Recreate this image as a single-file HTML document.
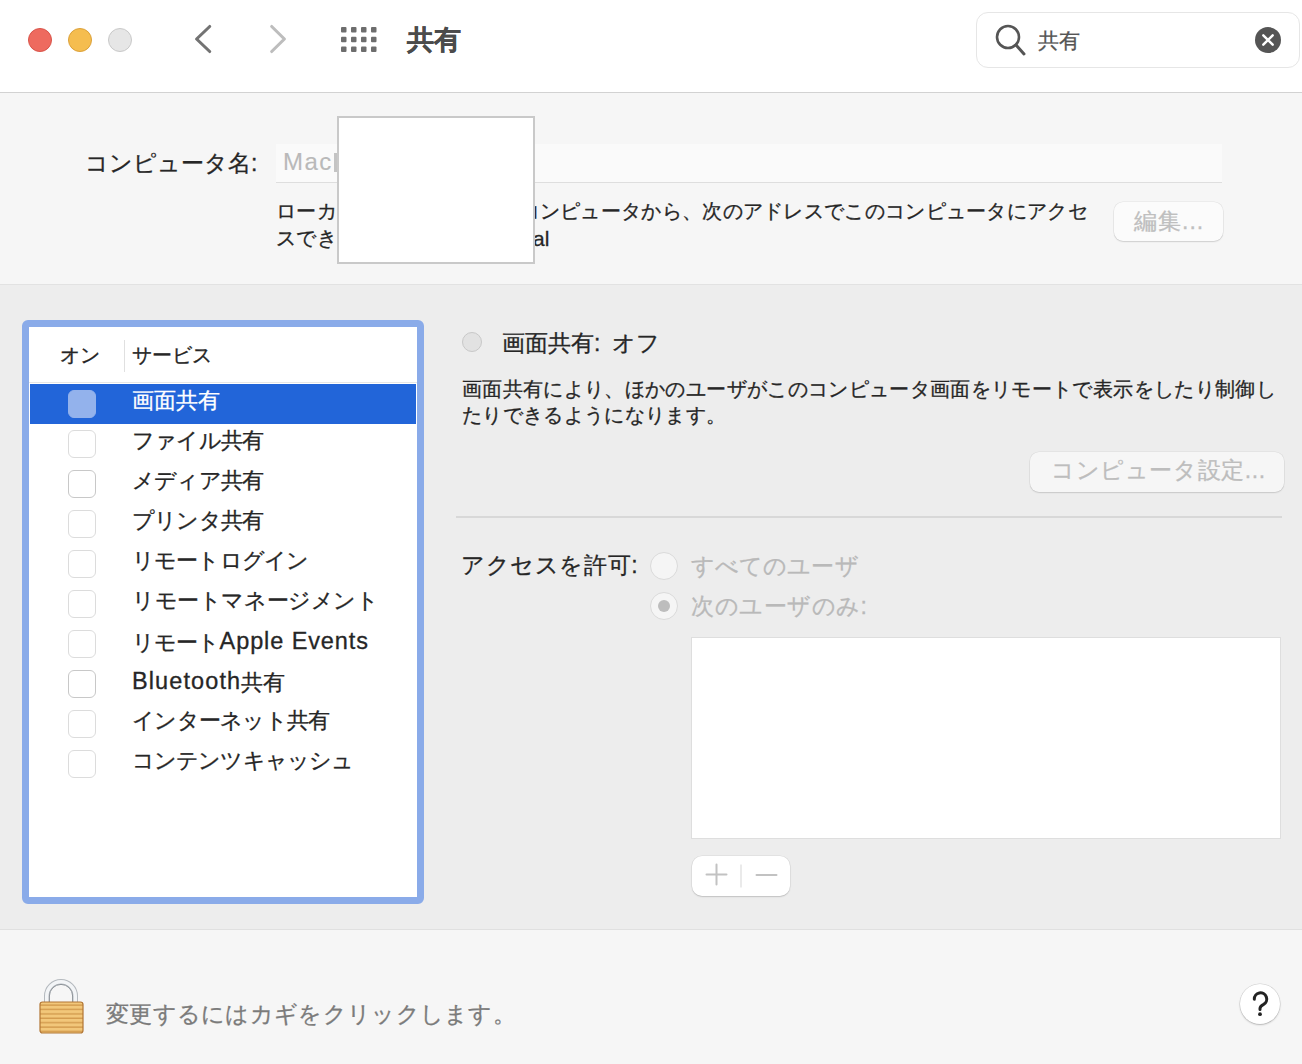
<!DOCTYPE html>
<html lang="ja">
<head>
<meta charset="utf-8">
<style>
html,body{margin:0;padding:0;}
body{width:1302px;height:1064px;position:relative;overflow:hidden;background:#ececec;font-family:"Liberation Sans",sans-serif;color:#262626;}
.a{position:absolute;}
.t{position:absolute;white-space:nowrap;line-height:1;-webkit-text-stroke:0.3px currentColor;}
#toolbar{left:0;top:0;width:1302px;height:92px;background:#fff;}
#tbline{left:0;top:92px;width:1302px;height:1px;background:#d2d2d2;}
#top{left:0;top:93px;width:1302px;height:191px;background:#f6f6f6;}
#topline{left:0;top:284px;width:1302px;height:1px;background:#e2e2e2;}
#mid{left:0;top:285px;width:1302px;height:644px;background:#ededed;}
#botline{left:0;top:929px;width:1302px;height:1px;background:#e0e0e0;}
#bot{left:0;top:930px;width:1302px;height:134px;background:#f6f6f6;}
.light{border-radius:50%;width:22px;height:22px;}
.cb{position:absolute;left:68px;width:26px;height:26px;border:1px solid #dcdcdc;border-radius:6px;background:#fff;box-sizing:content-box;}
.row{position:absolute;left:132px;font-size:21.5px;line-height:1;white-space:nowrap;color:#262626;-webkit-text-stroke:0.3px currentColor;}
</style>
</head>
<body>
<div id="toolbar" class="a"></div>
<div id="tbline" class="a"></div>
<div id="top" class="a"></div>
<div id="topline" class="a"></div>
<div id="mid" class="a"></div>
<div id="botline" class="a"></div>
<div id="bot" class="a"></div>

<!-- traffic lights -->
<div class="a light" style="left:28px;top:28px;background:#ee6a5f;border:1px solid #d9544a;"></div>
<div class="a light" style="left:68px;top:28px;background:#f5bd4f;border:1px solid #dca13a;"></div>
<div class="a light" style="left:108px;top:28px;background:#e6e6e6;border:1px solid #c9c9c9;"></div>

<!-- nav arrows -->
<svg class="a" style="left:180px;top:15px" width="120" height="50">
  <polyline points="29.7,11.5 16.6,24 29.7,36.5" fill="none" stroke="#737373" stroke-width="3.1" stroke-linecap="round" stroke-linejoin="round"/>
  <polyline points="91.7,11.5 104.4,24 91.7,36.5" fill="none" stroke="#bdbdbd" stroke-width="3.1" stroke-linecap="round" stroke-linejoin="round"/>
</svg>

<!-- grid icon -->
<svg class="a" style="left:340px;top:26px" width="40" height="28">
  <g fill="#6d6d6d">
    <rect x="1" y="1" width="5.5" height="5.5" rx="1"/><rect x="11" y="1" width="5.5" height="5.5" rx="1"/><rect x="21" y="1" width="5.5" height="5.5" rx="1"/><rect x="31" y="1" width="5.5" height="5.5" rx="1"/>
    <rect x="1" y="10.7" width="5.5" height="5.5" rx="1"/><rect x="11" y="10.7" width="5.5" height="5.5" rx="1"/><rect x="21" y="10.7" width="5.5" height="5.5" rx="1"/><rect x="31" y="10.7" width="5.5" height="5.5" rx="1"/>
    <rect x="1" y="20.5" width="5.5" height="5.5" rx="1"/><rect x="11" y="20.5" width="5.5" height="5.5" rx="1"/><rect x="21" y="20.5" width="5.5" height="5.5" rx="1"/><rect x="31" y="20.5" width="5.5" height="5.5" rx="1"/>
  </g>
</svg>
<div class="t" style="left:407px;top:27px;font-size:27px;font-weight:bold;color:#4b4b4b;">共有</div>

<!-- search -->
<div class="a" style="left:976px;top:12px;width:322px;height:54px;border:1px solid #e6e6e6;border-radius:12px;background:#fff;"></div>
<svg class="a" style="left:990px;top:20px" width="40" height="40">
  <circle cx="18" cy="17" r="11" fill="none" stroke="#555" stroke-width="2.6"/>
  <line x1="26" y1="25" x2="34" y2="34" stroke="#555" stroke-width="3" stroke-linecap="round"/>
</svg>
<div class="t" style="left:1038px;top:30px;font-size:21px;color:#555;">共有</div>
<svg class="a" style="left:1254px;top:26px" width="28" height="28">
  <circle cx="14" cy="14" r="13" fill="#555"/>
  <path d="M9.3 9.3 L18.7 18.7 M18.7 9.3 L9.3 18.7" stroke="#fff" stroke-width="2.4" stroke-linecap="round"/>
</svg>

<!-- computer name -->
<div class="t" style="left:85px;top:152px;font-size:23px;color:#262626;">コンピュータ名:</div>
<div class="a" style="left:276px;top:144px;width:946px;height:38px;background:#fafafa;border-bottom:1px solid #dedede;"></div>
<div class="t" style="left:283px;top:150px;font-size:24px;letter-spacing:1.4px;color:#b9b9b9;-webkit-text-stroke:0.1px currentColor;">Mac</div>
<div class="t" style="left:276px;top:200.5px;font-size:20px;color:#262626;letter-spacing:0.3px;">ローカルネットワーク上のコンピュータから、次のアドレスでこのコンピュータにアクセ</div>
<div class="t" style="left:276px;top:228px;font-size:20px;color:#262626;letter-spacing:0.3px;">スできます</div>
<div class="a" style="left:334px;top:153px;width:4px;height:19px;background:#c4c4c4;"></div>
<div class="t" style="left:533px;top:228px;font-size:21px;color:#262626;">al</div>
<div class="a" style="left:337px;top:116px;width:194px;height:144px;border:2px solid #c9c9c9;background:#fff;"></div>
<div class="a" style="left:1114px;top:202px;width:109px;height:39px;border-radius:9px;background:#fbfbfb;box-shadow:0 0 0 0.5px rgba(0,0,0,0.08),0 1px 1.5px rgba(0,0,0,0.12);"></div>
<div class="t" style="left:1134px;top:210px;font-size:23px;letter-spacing:1px;color:#bfbfbf;">編集...</div>

<!-- service list -->
<div class="a" style="left:22px;top:320px;width:388px;height:570px;border:7px solid #8aabe9;border-radius:6px;background:#fff;"></div>
<div class="t" style="left:60px;top:346px;font-size:19.5px;color:#262626;">オン</div>
<div class="a" style="left:124px;top:340px;width:1px;height:32px;background:#e0e0e0;"></div>
<div class="t" style="left:132px;top:346px;font-size:19.5px;color:#262626;">サービス</div>
<div class="a" style="left:29px;top:382px;width:388px;height:1px;background:#e6e6e6;"></div>
<div class="a" style="left:30px;top:384px;width:386px;height:40px;background:#2265d9;"></div>

<div class="cb" style="top:390px;background:#93b2ec;border-color:#93b2ec;"></div>
<div class="cb" style="top:430px;"></div>
<div class="cb" style="top:470px;border-color:#c8c8c8;"></div>
<div class="cb" style="top:510px;"></div>
<div class="cb" style="top:550px;"></div>
<div class="cb" style="top:590px;"></div>
<div class="cb" style="top:630px;"></div>
<div class="cb" style="top:670px;border-color:#c8c8c8;"></div>
<div class="cb" style="top:710px;"></div>
<div class="cb" style="top:750px;"></div>

<div class="row" style="top:391px;color:#fff;">画面共有</div>
<div class="row" style="top:431px;letter-spacing:-0.8px;">ファイル共有</div>
<div class="row" style="top:471px;letter-spacing:-0.8px;">メディア共有</div>
<div class="row" style="top:511px;letter-spacing:-0.8px;">プリンタ共有</div>
<div class="row" style="top:551px;letter-spacing:-0.85px;">リモートログイン</div>
<div class="row" style="top:591px;letter-spacing:-0.4px;">リモートマネージメント</div>
<div class="row" style="top:631px;"><span style="letter-spacing:-0.85px">リモート</span><span style="font-size:23.5px;letter-spacing:0.9px;position:relative;top:-1px">Apple Events</span></div>
<div class="row" style="top:671px;"><span style="font-size:23.5px;letter-spacing:1.1px;position:relative;top:-1px">Bluetooth</span>共有</div>
<div class="row" style="top:711px;letter-spacing:-0.75px;">インターネット共有</div>
<div class="row" style="top:751px;letter-spacing:-0.9px;">コンテンツキャッシュ</div>

<!-- right panel -->
<div class="a" style="left:462px;top:332px;width:18px;height:18px;border-radius:50%;background:#e2e2e2;border:1px solid #c8c8c8;"></div>
<div class="t" style="left:502px;top:332px;font-size:23px;color:#262626;word-spacing:5px;">画面共有: オフ</div>
<div class="t" style="left:462px;top:379px;font-size:20px;color:#262626;letter-spacing:0.35px;">画面共有により、ほかのユーザがこのコンピュータ画面をリモートで表示をしたり制御し</div>
<div class="t" style="left:462px;top:405px;font-size:20px;color:#262626;letter-spacing:0.35px;">たりできるようになります。</div>
<div class="a" style="left:1030px;top:452px;width:254px;height:40px;border-radius:9px;background:#f6f6f6;box-shadow:0 0 0 0.5px rgba(0,0,0,0.07),0 1px 1.5px rgba(0,0,0,0.12);"></div>
<div class="t" style="left:1051px;top:459px;font-size:23px;letter-spacing:0.6px;color:#bdbdbd;">コンピュータ設定...</div>
<div class="a" style="left:456px;top:516px;width:826px;height:2px;background:#d8d8d8;"></div>

<div class="t" style="left:461px;top:554px;font-size:23px;letter-spacing:0.6px;color:#262626;">アクセスを許可:</div>
<div class="a" style="left:650px;top:552px;width:26px;height:26px;border-radius:50%;background:#f5f5f5;border:1px solid #dadada;"></div>
<div class="t" style="left:691px;top:555px;font-size:23px;letter-spacing:0.1px;color:#b9b9b9;">すべてのユーザ</div>
<div class="a" style="left:650px;top:592px;width:26px;height:26px;border-radius:50%;background:#f5f5f5;border:1px solid #dadada;"></div>
<div class="a" style="left:658px;top:600px;width:12px;height:12px;border-radius:50%;background:#bdbdbd;"></div>
<div class="t" style="left:691px;top:595px;font-size:23px;letter-spacing:0.5px;color:#b9b9b9;">次のユーザのみ:</div>
<div class="a" style="left:691px;top:637px;width:588px;height:200px;background:#fff;border:1px solid #dedede;"></div>
<div class="a" style="left:692px;top:856px;width:98px;height:40px;border-radius:10px;background:#fff;box-shadow:0 0 0 0.5px rgba(0,0,0,0.08),0 1px 1.5px rgba(0,0,0,0.15);"></div>
<svg class="a" style="left:692px;top:856px" width="98" height="40">
  <path d="M24.5 8.5 V28.5 M14.5 18.5 H34.5" stroke="#c2c2c2" stroke-width="2" stroke-linecap="round" fill="none"/>
  <line x1="49" y1="8.5" x2="49" y2="31.5" stroke="#dcdcdc" stroke-width="1.2"/>
  <path d="M64.5 19 H84.5" stroke="#c2c2c2" stroke-width="2" stroke-linecap="round" fill="none"/>
</svg>

<!-- footer -->
<svg class="a" style="left:36px;top:975px" width="52" height="62">
  <defs>
    <linearGradient id="sh" x1="0" x2="1" y1="0" y2="0">
      <stop offset="0" stop-color="#9aa0a6"/><stop offset="0.3" stop-color="#f4f6f8"/><stop offset="0.7" stop-color="#f4f6f8"/><stop offset="1" stop-color="#9aa0a6"/>
    </linearGradient>
    <pattern id="stripes" x="0" y="0" width="10" height="4.4" patternUnits="userSpaceOnUse">
      <rect width="10" height="4.4" fill="#f2c77a"/>
      <rect y="3" width="10" height="1.4" fill="#d39b4e"/>
    </pattern>
  </defs>
  <path d="M10.8 28 V21 A14.2 14.2 0 0 1 39.2 21 V28" fill="none" stroke="#b4b9be" stroke-width="5.6"/>
  <path d="M10.8 28 V21 A14.2 14.2 0 0 1 39.2 21 V28" fill="none" stroke="#f3f5f7" stroke-width="3.6"/>
  <path d="M13.4 28 V21 A11.6 11.6 0 0 1 36.6 21 V28" fill="none" stroke="#8e949a" stroke-width="1"/>
  <rect x="4" y="27" width="43" height="31" rx="2.5" fill="url(#stripes)" stroke="#b27634" stroke-width="1.2"/>
</svg>
<div class="t" style="left:106px;top:1003px;font-size:23px;color:#7b7b7b;letter-spacing:0.3px;">変更するにはカギをクリックします。</div>
<div class="a" style="left:1240px;top:984px;width:40px;height:40px;border-radius:50%;background:#fff;box-shadow:0 0 0 0.5px rgba(0,0,0,0.15),0 1px 2px rgba(0,0,0,0.2);"></div>
<svg class="a" style="left:1240px;top:984px" width="40" height="40">
  <path d="M14.3 15.2 A6.2 6.2 0 1 1 23.6 20.4 Q20 22.3 20 24.6 V25.4" fill="none" stroke="#232323" stroke-width="3" stroke-linecap="round"/>
  <circle cx="20" cy="30.2" r="1.9" fill="#232323"/>
</svg>
</body>
</html>
